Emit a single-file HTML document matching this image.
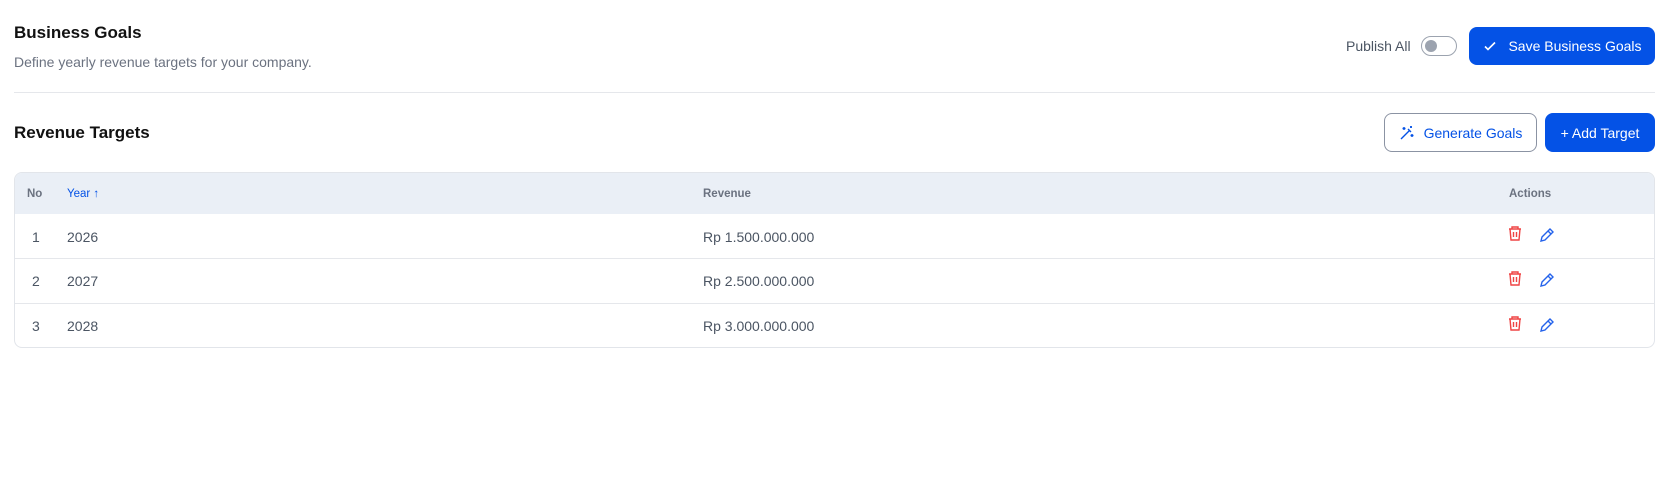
<!DOCTYPE html>
<html><head><style>
*{box-sizing:border-box;margin:0;padding:0}
body{width:1657px;height:479px;background:#fff;font-family:"Liberation Sans",sans-serif;position:relative;overflow:hidden;color:#111}
.a{position:absolute}
h1{position:absolute;left:14px;top:23px;font-size:17px;font-weight:bold;color:#111}
.sub{left:14px;top:54px;font-size:14px;color:#6b7280}
.div{left:14px;right:2px;top:92px;height:1px;background:#e5e7eb}
.btn{position:absolute;background:#0452e6;color:#fff;border-radius:8px;font-size:14px;display:flex;align-items:center;justify-content:center}
.tbl{left:14px;top:172px;width:1641px;height:176px;border:1px solid #e2e5ea;border-radius:8px;overflow:hidden}
.hd{position:absolute;left:0;right:0;top:0;height:41px;background:#eaeff6}
.row{position:absolute;left:0;right:0;height:45px;border-top:1px solid #e5e7eb;font-size:14px;color:#4b5563}
.row span,.hd span{position:absolute;top:50%;transform:translateY(-50%)}
.hd span{font-size:11.5px;font-weight:bold;color:#6b7280}
</style></head><body>
<h1>Business Goals</h1>
<div class="a sub">Define yearly revenue targets for your company.</div>
<div class="a" style="left:1346px;top:38px;font-size:14px;color:#4b5563">Publish All</div>
<div class="a" style="left:1421px;top:36px;width:36px;height:20px;border:1.5px solid #9ca3af;border-radius:10px"><div class="a" style="left:3px;top:3px;width:12px;height:12px;border-radius:50%;background:#9ca3af"></div></div>
<div class="btn" style="left:1469px;top:27px;width:186px;height:38px"><svg width="16" height="16" viewBox="0 0 16 16" style="margin-right:10px"><path d="M3 8.5l3 3 7-7" stroke="#fff" stroke-width="1.6" fill="none"/></svg>Save Business Goals</div>
<div class="a div"></div>
<div class="a" style="left:14px;top:123px;font-size:17px;font-weight:bold">Revenue Targets</div>
<div class="a" style="left:1384px;top:113px;width:153px;height:39px;border:1px solid #8b93a3;border-radius:8px;display:flex;align-items:center;justify-content:center;color:#0452e6;font-size:14px"><svg width="16" height="16" viewBox="0 0 16 16" style="margin-right:9px" fill="none" stroke="#0452e6" stroke-width="1.4"><path d="M2 14L11 5M9 4l3 3M5 2v3M3.5 3.5h3M13 9v3M11.5 10.5h3M12 1v2M11 2h2"/></svg>Generate Goals</div>
<div class="btn" style="left:1545px;top:113px;width:110px;height:39px">+ Add Target</div>
<div class="a tbl">
<div class="hd"><span style="left:12px">No</span><span style="left:52px;color:#0452e6;font-weight:normal">Year ↑</span><span style="left:688px">Revenue</span><span style="left:1494px">Actions</span></div>
<div class="row" style="top:41px;border-top:none"><span style="left:17px">1</span><span style="left:52px">2026</span><span style="left:688px">Rp 1.500.000.000</span></div>
<div class="row" style="top:85px"><span style="left:17px">2</span><span style="left:52px">2027</span><span style="left:688px">Rp 2.500.000.000</span></div>
<div class="row" style="top:130px"><span style="left:17px">3</span><span style="left:52px">2028</span><span style="left:688px">Rp 3.000.000.000</span></div>
</div>
<svg class="a" style="left:0;top:0" width="1657" height="479">
<defs>
<g id="t" fill="none" stroke="#ef4444" stroke-width="1.4"><path d="M-6-5h12M-3-5v-2h6v2M-5-5l1 11h8l1-11M-1.5-2v5M1.5-2v5"/></g>
<g id="p" fill="none" stroke="#2563eb" stroke-width="1.4"><path d="M-6 7l1-4 8-8 3 3-8 8zM1-3l3 3"/></g>
</defs>
<use href="#t" x="1515" y="234"/><use href="#p" x="1547" y="234"/>
<use href="#t" x="1515" y="279"/><use href="#p" x="1547" y="279"/>
<use href="#t" x="1515" y="324"/><use href="#p" x="1547" y="324"/>
</svg>
</body></html>
